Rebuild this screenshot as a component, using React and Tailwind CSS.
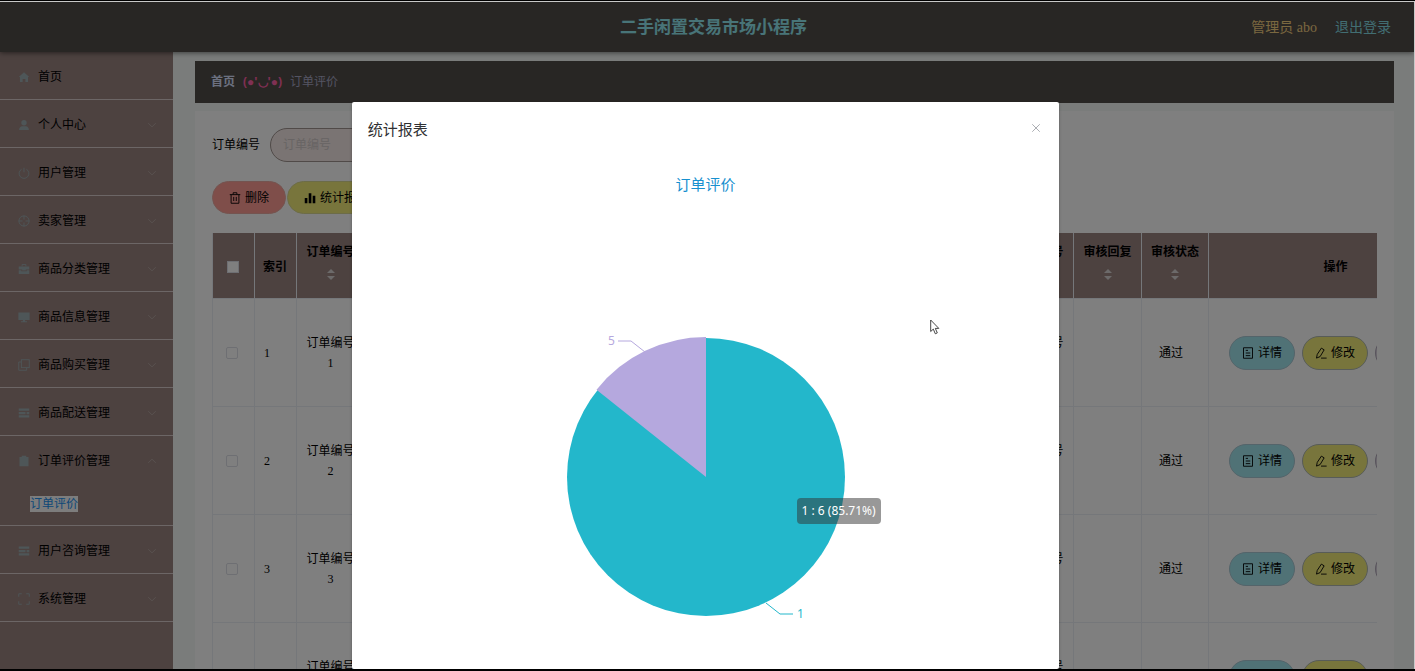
import { useState } from "react";
import clsx from "clsx";

const MENU = [
  { label: "首页", icon: "home", leaf: true },
  { label: "个人中心", icon: "user" },
  { label: "用户管理", icon: "power" },
  { label: "卖家管理", icon: "aim" },
  { label: "商品分类管理", icon: "briefcase" },
  { label: "商品信息管理", icon: "screen" },
  { label: "商品购买管理", icon: "copy" },
  { label: "商品配送管理", icon: "list" },
  { label: "订单评价管理", icon: "clipboard", children: ["订单评价"] },
  { label: "用户咨询管理", icon: "list" },
  { label: "系统管理", icon: "full" },
];

const ROWS = [
  { id: 1, order: "订单编号1", account: "卖家账号1", status: "通过" },
  { id: 2, order: "订单编号2", account: "卖家账号2", status: "通过" },
  { id: 3, order: "订单编号3", account: "卖家账号3", status: "通过" },
  { id: 4, order: "订单编号4", account: "卖家账号4", status: "通过" },
];

const SHAPES = {
  home: <path fill="currentColor" stroke="none" d="M8 1.5 15 8h-1.6v6.5H9.8v-4H6.2v4H2.6V8H1z" />,
  user: (
    <g fill="currentColor" stroke="none">
      <circle cx="8" cy="5" r="3.6" />
      <path d="M1.5 14.5c0-3 2-4.8 4-4.8h5c2 0 4 1.8 4 4.8z" />
    </g>
  ),
  power: <path d="M8 1v6M4.8 3a6.5 6.5 0 1 0 6.4 0" />,
  aim: (
    <g>
      <circle cx="8" cy="8" r="6.8" />
      <path d="M8 1v5M8 10v5M1 8h5M10 8h5" />
    </g>
  ),
  briefcase: (
    <g>
      <path d="M5.5 4.5V2h5v2.5" />
      <path fill="currentColor" stroke="none" d="M1 4.5h14v4.3h-4.5v1.2h-5V8.8H1zM1 9.8h3.5V11h7V9.8H15v4.7H1z" />
    </g>
  ),
  screen: <path fill="currentColor" stroke="none" d="M.5 2h15v10h-6v1.5H12V15H4v-1.5h2.5V12h-6z" />,
  copy: (
    <g>
      <rect x="4.5" y="1" width="10.5" height="10.5" />
      <path d="M4 4H1v11h10.5v-3" />
    </g>
  ),
  list: <path fill="currentColor" stroke="none" d="M1 2h14v3H1zM1 6.5h9v3H1zM11.5 6.5H15v3h-3.5zM1 11h14v3H1z" />,
  clipboard: <path fill="currentColor" stroke="none" d="M2 2.5h3V1h6v1.5h3V15H2z" />,
  full: <path d="M1 5V1h4M11 1h4v4M15 11v4h-4M5 15H1v-4" />,
  down: <path d="m2 5 6 6 6-6" />,
  up: <path d="m2 11 6-6 6 6" />,
  trash: <path d="M1 3.5h14M5.5 3.5V1h5v2.5M2.8 3.5V15h10.4V3.5M6.3 6.5V12M9.7 6.5V12" />,
  bars: <path fill="currentColor" stroke="none" d="M1 8h3.5v7H1zM6.3 1.5h3.5V15H6.3zM11.6 5h3.5v10h-3.5z" />,
  doc: <path d="M2 1h12v14H2zM5 4.5h3M5 8h6M5 11.5h6" />,
  edit: <path d="M8.5 1.5 12.2 3.8 6.8 12.8 2 14.8l1-5zM8 14.8h7.5" />,
  close: <path d="m2 2 12 12M14 2 2 14" />,
};

function Icon({ name, className }) {
  return (
    <svg
      viewBox="0 0 16 16"
      className={clsx("shrink-0", className)}
      fill="none"
      stroke="currentColor"
      strokeWidth="1.2"
      aria-hidden="true"
    >
      {SHAPES[name]}
    </svg>
  );
}

function Header() {
  return (
    <header className="relative z-10 grid h-[50px] shrink-0 grid-cols-3 items-center bg-[#504c49] pt-0.5 pr-[23px] pl-9 shadow-[0_1px_5px_rgba(0,0,0,0.5)]">
      <h1 className="col-start-2 text-center text-[17px] font-bold text-[#90e8f0]">
        二手闲置交易市场小程序
      </h1>
      <div className="flex justify-end gap-[18px] text-sm">
        <span className="text-[#f4d080]">管理员 abo</span>
        <a href="#logout" className="text-[#84dce4]">
          退出登录
        </a>
      </div>
    </header>
  );
}

function Sidebar({ open, onToggle }) {
  return (
    <nav className="w-[173px] shrink-0 bg-[#9a8480] text-xs text-black">
      {MENU.map((item) => (
        <div key={item.label} className="border-b border-[#d8cccc]">
          <button
            type="button"
            onClick={() => onToggle(item.label)}
            className="flex h-[47px] w-full items-center pt-0.5 pr-4 pl-[18px] text-left"
          >
            <Icon name={item.icon} className="mr-2 h-3 w-3 text-[#9cacb0]" />
            <span className="flex-1">{item.label}</span>
            {!item.leaf && (
              <Icon
                name={open === item.label ? "up" : "down"}
                className="h-[10px] w-[10px] text-[#b8aca8]"
              />
            )}
          </button>
          {item.children && open === item.label && (
            <div className="flex h-[42px] items-center pl-[30px]">
              {item.children.map((child) => (
                <a key={child} href="#orders" className="bg-[#fafafa] leading-4 text-[#2090f0]">
                  {child}
                </a>
              ))}
            </div>
          )}
        </div>
      ))}
    </nav>
  );
}

function SortHead({ children }) {
  return (
    <th className="border-r border-b border-[#ebeef5] px-[9px] pt-2 align-top font-bold">
      <div className="flex flex-col items-center leading-[23px]">
        <span className="whitespace-nowrap">{children}</span>
        <svg viewBox="0 0 8 12" className="my-1 h-3 w-2" fill="#d8d4d4" aria-hidden="true">
          <path d="M4 1 8 5H0zM4 12 0 8h8z" />
        </svg>
      </div>
    </th>
  );
}

function Cell({ className, children }) {
  return (
    <td className={clsx("border-r border-b border-[#ebeef5] px-[9px] leading-5", className)}>
      {children}
    </td>
  );
}

function RowButton({ icon, label, className, children }) {
  return (
    <button
      type="button"
      aria-label={label}
      className={clsx(
        "flex h-[34px] w-[66px] shrink-0 items-center justify-center gap-1 rounded-full border whitespace-nowrap",
        className
      )}
    >
      <Icon name={icon} className="h-3 w-3" />
      {children}
    </button>
  );
}

function OrderTable() {
  return (
    <div className="overflow-hidden">
      <table className="w-[1250px] table-fixed border-separate border-spacing-0 text-xs text-black">
        <colgroup>
          <col className="w-[43px]" />
          <col className="w-[42px]" />
          <col className="w-[68px]" />
          <col />
          <col className="w-[68px]" />
          <col className="w-[68px]" />
          <col className="w-[67px]" />
          <col className="w-[253px]" />
        </colgroup>
        <thead>
          <tr className="h-[66px] bg-[#9a8480]">
            <th className="border-r border-b border-l border-[#ebeef5] pt-0.5 pl-[14px] text-left">
              <input
                type="checkbox"
                aria-label="全选"
                className="block h-3 w-3 appearance-none border border-[#dcdfe6] bg-white"
              />
            </th>
            <th className="border-r border-b border-[#ebeef5] pt-0.5 pl-2 text-left font-bold">索引</th>
            <SortHead>订单编号</SortHead>
            <th className="border-r border-b border-[#ebeef5]" />
            <SortHead>卖家账号</SortHead>
            <SortHead>审核回复</SortHead>
            <SortHead>审核状态</SortHead>
            <th className="border-b border-[#ebeef5] pt-0.5 font-bold">操作</th>
          </tr>
        </thead>
        <tbody>
          {ROWS.map((row) => (
            <tr key={row.id} className="h-[108px]">
              <Cell className="border-l pl-[13px]">
                <input
                  type="checkbox"
                  aria-label={row.order}
                  className="block h-3 w-3 appearance-none rounded-xs border border-[#dcdfe6] bg-white"
                />
              </Cell>
              <Cell>{row.id}</Cell>
              <Cell className="text-center break-all">{row.order}</Cell>
              <Cell />
              <Cell className="text-center break-all">{row.account}</Cell>
              <Cell />
              <Cell className="pr-[17px] text-center">{row.status}</Cell>
              <Cell>
                <div className="flex justify-center gap-[7px]">
                  <RowButton icon="doc" className="border-[#a8c8d4] bg-[#a0e4ec]">
                    详情
                  </RowButton>
                  <RowButton icon="edit" className="border-[#b0b8b0] bg-[#f0ea78]">
                    修改
                  </RowButton>
                  <RowButton icon="trash" label="删除" className="border-[#b0a8b8] bg-[#d8d0dc]" />
                </div>
              </Cell>
            </tr>
          ))}
        </tbody>
      </table>
    </div>
  );
}

function Content() {
  return (
    <main className="flex min-w-0 flex-1 flex-col gap-2 bg-[#f4f8f6] pt-[9px] pr-5 pl-[22px]">
      <div className="flex h-[42px] shrink-0 items-center bg-[#504c49] px-4 text-xs">
        <a href="#home" className="font-bold text-[#d8e0ff]">
          首页
        </a>
        <span className="mx-2 font-['Noto_Sans',sans-serif] font-bold text-[#ff60a8]">(●'◡'●)</span>
        <span className="text-[#a8a8c4]">订单评价</span>
      </div>
      <section className="flex-1 bg-white px-[17px] pt-[17px]">
        <form className="flex items-center gap-[10px] text-xs text-black">
          <label htmlFor="order-no">订单编号</label>
          <input
            id="order-no"
            placeholder="订单编号"
            className="h-[34px] w-[160px] rounded-full border border-[#a09490] bg-[#f4e8e6] px-3 placeholder:text-[#d0c8c8]"
          />
        </form>
        <div className="mt-[19px] mb-[19px] flex gap-px text-xs text-black">
          <button
            type="button"
            className="flex h-[33px] items-center gap-1 rounded-full border border-[#e8a8a0] bg-[#ff9c94] px-4"
          >
            <Icon name="trash" className="h-3 w-3" />
            删除
          </button>
          <button
            type="button"
            className="flex h-[33px] items-center gap-1 rounded-full border border-[#d8d890] bg-[#f0ea78] px-4"
          >
            <Icon name="bars" className="h-3 w-3" />
            统计报表
          </button>
        </div>
        <OrderTable />
      </section>
    </main>
  );
}

function PieChart() {
  return (
    <div className="relative mx-auto w-[340px]">
      <svg
        viewBox="0 0 340 300"
        className="block h-[300px] w-[340px] font-['Noto_Sans',sans-serif] text-xs"
        role="img"
        aria-label="订单评价"
      >
        <circle cx="170" cy="150" r="139" fill="#23b7cb" />
        <path d="M170 150 60.5 62.7A140 140 0 0 1 170 10z" fill="#b5a8de" />
        <path d="M109 25 95 14H82" fill="none" stroke="#b5a8de" />
        <text x="72" y="18" fill="#b5a8de">
          5
        </text>
        <path d="M230 276l14 11h13" fill="none" stroke="#23b7cb" />
        <text x="261" y="291" fill="#23b7cb">
          1
        </text>
      </svg>
      <div className="absolute top-[171px] left-[261px] rounded-sm bg-[#323232]/50 px-[5px] font-['Noto_Sans',sans-serif] text-xs leading-[26px] whitespace-nowrap text-white">
        1 : 6 (85.71%)
      </div>
      <svg viewBox="0 0 10 16" className="absolute -top-2 left-[394px] h-4 w-[10px]" aria-hidden="true">
        <path
          d="M.7 1v11.5l2.6-2.4 2 4.7 2-.9-2-4.5h3.5z"
          fill="#fff"
          stroke="#333"
          strokeWidth="0.9"
        />
      </svg>
    </div>
  );
}

function ReportDialog({ onClose }) {
  return (
    <div className="absolute inset-0 z-20 overflow-hidden bg-black/50 pt-[100px] pr-[3px]">
      <div
        role="dialog"
        aria-label="统计报表"
        className="mx-auto h-full w-[50vw] rounded-xs bg-white shadow-[0_1px_3px_rgba(0,0,0,0.3)]"
      >
        <div className="flex h-14 items-center justify-between pr-[18px] pl-4">
          <h2 className="text-[15px] text-[#303133]">统计报表</h2>
          <button type="button" aria-label="关闭" onClick={onClose} className="mb-1 text-[#909399]">
            <Icon name="close" className="h-[10px] w-[10px]" />
          </button>
        </div>
        <h3 className="mt-4 mb-[131px] text-center text-[15px] leading-[22px] text-[#1790cf]">
          订单评价
        </h3>
        <PieChart />
      </div>
    </div>
  );
}

export default function App() {
  const [open, setOpen] = useState("订单评价管理");
  const [showReport, setShowReport] = useState(true);

  return (
    <div className="flex h-screen flex-col bg-black pt-px pb-[2px] font-['Liberation_Serif','Noto_Sans_CJK_SC',sans-serif]">
      <div className="relative flex min-h-0 flex-1 flex-col overflow-hidden border-t border-r border-[#c8c8c8] bg-white">
        <Header />
        <div className="flex min-h-0 flex-1">
          <Sidebar open={open} onToggle={setOpen} />
          <Content />
        </div>
        {showReport && <ReportDialog onClose={() => setShowReport(false)} />}
      </div>
    </div>
  );
}
